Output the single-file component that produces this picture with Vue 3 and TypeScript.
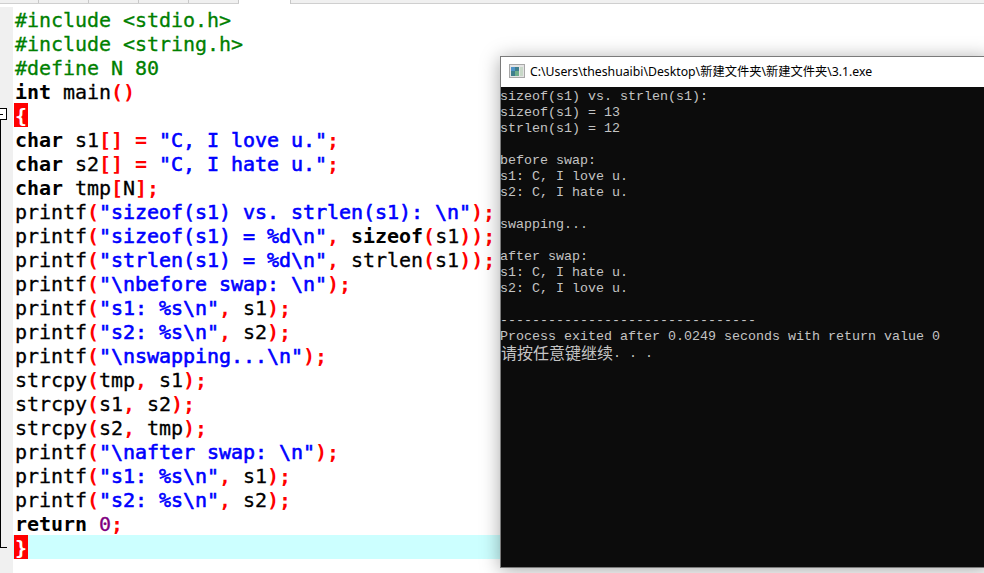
<script setup lang="ts">
type Tok = [string, string]
const P = 'p', K = 'k', S = 's', Y = 'y', N = 'n', T = 't'
const lines: Tok[][] = [
  [['#include <stdio.h>', P]],
  [['#include <string.h>', P]],
  [['#define N 80', P]],
  [['int', K], [' main', T], ['()', Y]],
  [['{', 'b']],
  [['char', K], [' s1', T], ['[]', Y], [' ', T], ['=', Y], [' ', T], ['"C, I love u."', S], [';', Y]],
  [['char', K], [' s2', T], ['[]', Y], [' ', T], ['=', Y], [' ', T], ['"C, I hate u."', S], [';', Y]],
  [['char', K], [' tmp', T], ['[', Y], ['N', T], [']', Y], [';', Y]],
  [['printf', T], ['(', Y], ['"sizeof(s1) vs. strlen(s1): \\n"', S], [');', Y]],
  [['printf', T], ['(', Y], ['"sizeof(s1) = %d\\n"', S], [',', Y], [' ', T], ['sizeof', K], ['(', Y], ['s1', T], ['));', Y]],
  [['printf', T], ['(', Y], ['"strlen(s1) = %d\\n"', S], [',', Y], [' strlen', T], ['(', Y], ['s1', T], ['));', Y]],
  [['printf', T], ['(', Y], ['"\\nbefore swap: \\n"', S], [');', Y]],
  [['printf', T], ['(', Y], ['"s1: %s\\n"', S], [',', Y], [' s1', T], [');', Y]],
  [['printf', T], ['(', Y], ['"s2: %s\\n"', S], [',', Y], [' s2', T], [');', Y]],
  [['printf', T], ['(', Y], ['"\\nswapping...\\n"', S], [');', Y]],
  [['strcpy', T], ['(', Y], ['tmp', T], [',', Y], [' s1', T], [');', Y]],
  [['strcpy', T], ['(', Y], ['s1', T], [',', Y], [' s2', T], [');', Y]],
  [['strcpy', T], ['(', Y], ['s2', T], [',', Y], [' tmp', T], [');', Y]],
  [['printf', T], ['(', Y], ['"\\nafter swap: \\n"', S], [');', Y]],
  [['printf', T], ['(', Y], ['"s1: %s\\n"', S], [',', Y], [' s1', T], [');', Y]],
  [['printf', T], ['(', Y], ['"s2: %s\\n"', S], [',', Y], [' s2', T], [');', Y]],
  [['return', K], [' ', T], ['0', N], [';', Y]],
  [['}', 'b']],
]
const output = [
  'sizeof(s1) vs. strlen(s1):',
  'sizeof(s1) = 13',
  'strlen(s1) = 12',
  '',
  'before swap:',
  's1: C, I love u.',
  's2: C, I hate u.',
  '',
  'swapping...',
  '',
  'after swap:',
  's1: C, I hate u.',
  's2: C, I love u.',
  '',
  '--------------------------------',
  'Process exited after 0.0249 seconds with return value 0',
]
const tabs = [39, 50, 50, 50, 50]
</script>

<template>
  <div class="screen">
    <div class="tabs">
      <div v-for="(w, i) in tabs" :key="i" class="tab" :style="{ width: w + 'px' }"></div>
      <div class="tab active"></div>
      <div class="tab rest"></div>
    </div>
    <div class="editor">
      <div class="gutter">
        <div class="fold-box"></div>
        <div class="fold-line"></div>
        <div class="fold-end"></div>
      </div>
      <div class="code">
        <div v-for="(line, i) in lines" :key="i" class="line" :class="{ current: i === 22 }">
          <span v-for="(tok, j) in line" :key="j" :class="tok[1]">{{ tok[0] }}</span>
        </div>
      </div>
    </div>
    <div class="console">
      <div class="title">
        <svg class="ico" width="16" height="14" viewBox="0 0 16 14">
          <rect x="0.5" y="0.5" width="15" height="13" fill="#e4e4e4" stroke="#a8a8a8" />
          <rect x="2" y="3" width="8" height="9" fill="#3f7f8c" />
          <rect x="2" y="3" width="4" height="4" fill="#4f93c8" />
          <rect x="6" y="7" width="4" height="5" fill="#6fae8c" />
          <rect x="11" y="3" width="3" height="9" fill="#c8d8c8" />
        </svg>
        <span>C:\Users\theshuaibi\Desktop\新建文件夹\新建文件夹\3.1.exe</span>
      </div>
      <div class="out">
        <div v-for="(l, i) in output" :key="i" class="oline">{{ l }}</div>
        <div class="oline last"><span class="cjk">请按任意键继续</span><span class="dots">. . .</span></div>
      </div>
    </div>
  </div>
</template>

<style>
html, body { margin: 0; background: #fff; }
</style>

<style scoped>
.screen {
  position: relative;
  width: 984px;
  height: 573px;
  overflow: hidden;
  background: #fff;
}
.tabs {
  display: flex;
  height: 4px;
  box-sizing: border-box;
  background: #f0f0f0;
  border-bottom: 1px solid #cfcfcf;
}
.tab {
  border-right: 1px solid #c8c8c8;
  box-sizing: border-box;
}
.tab.active { width: 52px; background: #fff; margin-bottom: -1px; }
.tab.rest { flex: 1; background: #f0f0f0; border-right: none; border-left: 1px solid #c8c8c8; margin-left: -1px; }
.editor {
  display: flex;
  height: 569px;
}
.gutter {
  position: relative;
  width: 13px;
  margin-top: 3px;
  background: #f0f0f0;
  flex: none;
}
.fold-box {
  position: absolute;
  left: -4px;
  top: 101px;
  width: 9px;
  height: 10px;
  border: 1px solid #000;
  background: linear-gradient(#000, #000) 1px center / 5px 1px no-repeat #fff;
}
.fold-line {
  position: absolute;
  left: 0;
  top: 113px;
  width: 1px;
  height: 427px;
  background: #000;
}
.fold-end {
  position: absolute;
  left: 0;
  top: 540px;
  width: 7px;
  height: 1px;
  background: #000;
}
.code {
  flex: 1;
  padding-top: 3px;
  font-family: "DejaVu Sans Mono", monospace;
  font-size: 20px;
  line-height: 26px;
  font-weight: 700;
  letter-spacing: -0.04px;
}
.line {
  height: 24px;
  padding-left: 15px;
  margin-left: -13px;
  white-space: pre;
  color: #000;
}
.current { background: #ccffff; }
.p { color: #008000; font-weight: 400; -webkit-text-stroke: 0.3px #008000; }
.k { color: #000; }
.t { color: #000; font-weight: 400; -webkit-text-stroke: 0.3px #000; }
.s { color: #0000ff; font-weight: 400; -webkit-text-stroke: 0.6px #0000ff; }
.y { color: #ff0000; }
.n { color: #800080; font-weight: 400; -webkit-text-stroke: 0.3px #800080; }
.b {
  display: inline-block;
  vertical-align: top;
  height: 24px;
  width: 14px;
  margin-left: -1px;
  padding-left: 1px;
  box-sizing: border-box;
  color: #fff;
  background: #ff0000;
}
.console {
  position: absolute;
  left: 500px;
  top: 56px;
  width: 490px;
  height: 512px;
  box-sizing: border-box;
  border: 1px solid #7a7a7a;
  border-right: none;
  background: #fff;
  box-shadow: 0 2px 18px rgba(0, 0, 0, 0.35);
  display: flex;
  flex-direction: column;
}
.title {
  height: 30px;
  flex: none;
  display: flex;
  align-items: center;
  gap: 5px;
  padding-left: 8px;
  padding-bottom: 2px;
  box-sizing: border-box;
  font-family: "Noto Sans", "Noto Sans CJK SC", sans-serif;
  font-size: 12.25px;
  color: #000;
  white-space: nowrap;
}
.ico { flex: none; }
.out {
  flex: 1;
  background: #0c0c0c;
  color: #c4c4c4;
  font-family: "Liberation Mono", "Noto Sans CJK SC", monospace;
  font-size: 13.33px;
  line-height: 16px;
  padding-top: 2px;
}
.oline {
  height: 16px;
  white-space: pre;
  text-indent: -1px;
}
.last {
  display: flex;
  align-items: flex-start;
}
.cjk {
  text-indent: 0;
  font-family: "Noto Sans CJK SC", sans-serif;
  font-size: 16px;
  line-height: 14px;
}
.dots {
  margin-top: 1px;
  margin-left: 1px;
}
</style>
